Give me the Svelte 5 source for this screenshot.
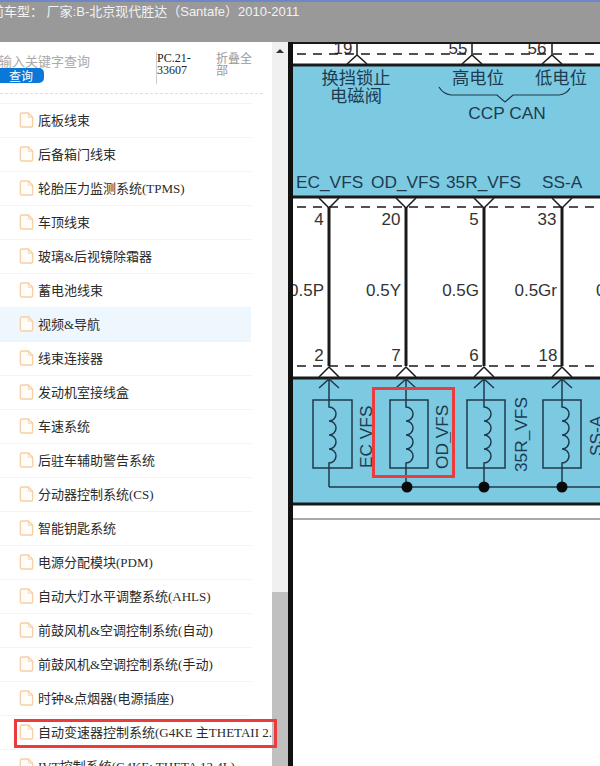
<script>
  const items = [
    '底板线束', '后备箱门线束', '轮胎压力监测系统(TPMS)', '车顶线束', '玻璃&后视镜除霜器',
    '蓄电池线束', '视频&导航', '线束连接器', '发动机室接线盒', '车速系统', '后驻车辅助警告系统',
    '分动器控制系统(CS)', '智能钥匙系统', '电源分配模块(PDM)', '自动大灯水平调整系统(AHLS)',
    '前鼓风机&空调控制系统(自动)', '前鼓风机&空调控制系统(手动)', '时钟&点烟器(电源插座)',
    '自动变速器控制系统(G4KE 主THETAII 2.4L)', 'IVT控制系统(G4KE: THETA 12.4L)'
  ];
  const wires = [
    { x: 329, box: 313, w: 39 },
    { x: 406, box: 390, w: 38 },
    { x: 484, box: 467, w: 38 },
    { x: 562, box: 543, w: 38 }
  ];
  const tops = [357, 472, 552];
  const upper = [['4', 319], ['20', 391], ['5', 474], ['33', 547]];
  const lower = [['2', 319], ['7', 396], ['6', 474], ['18', 548]];
  const gauges = [['0.5P', 324], ['0.5Y', 401], ['0.5G', 479], ['0.5Gr', 557]];
  const coil = 'a7 7 0 0 1 0 14 a7 7 0 0 1 0 14 a7 7 0 0 1 0 14 a7 7 0 0 1 0 14';
</script>

<div class="page">
  <header class="top">前车型： 厂家:B-北京现代胜达（Santafe）2010-2011</header>

  <div class="main">
    <aside class="side">
      <div class="search">
        <div class="query">
          <div class="hint">输入关键字查询</div>
          <button class="go">查询</button>
        </div>
        <div class="code">PC.21-33607</div>
        <div class="fold">折叠全部</div>
      </div>
      <ul class="list">
        {#each items as item, i}
          <li class:hover={i === 6} class:picked={i === 18}>
            <svg class="doc" width="15" height="16" viewBox="0 0 15 17">
              <path d="M2.500 1h7l4.500 4.500v9a1.500 1.500 0 0 1-1.500 1.500h-10a1.500 1.500 0 0 1-1.500-1.500v-12a1.500 1.500 0 0 1 1.500-1.500z" fill="#fffdf9" stroke="#f6d0a6" stroke-width="1.500" />
              <path d="M9.500 1v4.500h4.500" fill="none" stroke="#f6d0a6" />
            </svg>
            <span>{item}</span>
          </li>
        {/each}
      </ul>
    </aside>

    <div class="scroll">
      <div class="arrow"></div>
      <div class="thumb"></div>
    </div>

    <svg class="diagram" width="312" height="724" viewBox="288 42 312 724">
      <rect x="288" y="42" width="312" height="724" fill="#fff" />
      <rect x="293" y="65" width="307" height="132" fill="#7ccae2" />
      <rect x="293" y="378" width="307" height="126" fill="#7ccae2" />

      <g class="pin" text-anchor="middle">
        <text x="343" y="54">19</text>
        <text x="458" y="54">55</text>
        <text x="537" y="54">56</text>
        {#each upper as [t, x]}<text {x} y="225">{t}</text>{/each}
        {#each lower as [t, x]}<text {x} y="361">{t}</text>{/each}
      </g>
      <g class="pin" text-anchor="end">
        {#each gauges as [t, x]}<text {x} y="296">{t}</text>{/each}
      </g>
      <text class="edge" x="596" y="296">0</text>

      <g stroke="#1a1a1a" fill="none">
        <path d="M288 43H600" stroke-width="2" />
        <path d="M293 65H600M293 197H600M293 378H600M293 504H600" stroke-width="3" />
        <path d="M293 519H600" stroke="#555" />
        <path d="M297 54H600M297 207H600M297 366H600" stroke-width="1.500" stroke-dasharray="9 7" />

        {#each tops as x}
          <path d="M{x} 42V55M{x - 10} 64L{x} 55L{x + 10} 64" stroke-width="1.500" />
        {/each}

        {#each wires as w}
          <path d="M{w.x} 207V366" stroke-width="3" />
          <path d="M{w.x - 10} 198L{w.x} 208L{w.x + 10} 198M{w.x - 10} 377L{w.x} 367L{w.x + 10} 377" stroke-width="1.500" />
          <path d="M{w.x} 379V407{coil}V487M{w.x - 10} 388L{w.x} 379L{w.x + 10} 388" stroke="#1f3a4a" stroke-width="1.500" />
          <rect x={w.box} y="400" width={w.w} height="68" stroke="#1f3a4a" stroke-width="1.500" />
        {/each}

        <path d="M329 487H600" stroke="#1f3a4a" stroke-width="1.500" />
        <path d="M439 87q4 7 12 8h46l8 7 8-7h46q8-1 11-7" stroke="#1f3a4a" stroke-width="1.200" />
        <path d="M450.500 432V443" stroke="#4a6f82" stroke-width="1.200" />
        <path d="M290.500 42V766" stroke-width="5" stroke="#111" />
      </g>

      <circle cx="407" cy="487" r="5.500" fill="#0a0a0a" />
      <circle cx="484" cy="487" r="5.500" fill="#0a0a0a" />
      <circle cx="562" cy="487" r="5.500" fill="#0a0a0a" />

      <g class="label">
        <text x="356" y="84" text-anchor="middle">换挡锁止</text>
        <text x="356" y="102" text-anchor="middle">电磁阀</text>
        <text x="478" y="84" text-anchor="middle">高电位</text>
        <text x="561" y="84" text-anchor="middle">低电位</text>
        <text x="507" y="119" text-anchor="middle">CCP CAN</text>
        <text x="296" y="188">EC_VFS</text>
        <text x="371" y="188">OD_VFS</text>
        <text x="446" y="188">35R_VFS</text>
        <text x="542" y="188">SS-A</text>
        <text transform="translate(372 468) rotate(-90)">EC VFS</text>
        <text transform="translate(448 469) rotate(-90)">OD VFS</text>
        <text transform="translate(527 472) rotate(-90)">35R_VFS</text>
        <text transform="translate(602 456) rotate(-90)">SS-A</text>
      </g>

      <rect x="373.500" y="388.500" width="80" height="88" fill="none" stroke="#ec3b3b" stroke-width="3" />
    </svg>
  </div>
</div>

<style>
  :global(body) {
    margin: 0;
    overflow: hidden;
  }
  .page {
    width: 600px;
    height: 766px;
    display: flex;
    flex-direction: column;
    overflow: hidden;
    font-family: "Liberation Serif", "Noto Sans CJK SC", serif;
  }
  .top {
    height: 40px;
    flex: none;
    margin-left: -9px;
    border-top: 2px solid #6f86c9;
    background: #999;
    color: #f2f2f2;
    font: 13px/19px "Liberation Sans", "Noto Sans CJK SC", sans-serif;
    white-space: nowrap;
  }
  .main {
    flex: 1;
    min-height: 0;
    display: flex;
  }
  .side {
    width: 272px;
    flex: none;
    background: #fff;
  }
  .search {
    height: 51px;
    width: 263px;
    display: flex;
    border-bottom: 1px dashed #ddd;
    margin-bottom: 9px;
  }
  .query {
    width: 157px;
    flex: none;
    padding-top: 12px;
  }
  .hint {
    margin-left: -1px;
    color: #aaa;
    font: 13px/14px "Noto Sans CJK SC", sans-serif;
  }
  .go {
    display: block;
    width: 44px;
    height: 15px;
    padding: 0 2px 0 0;
    border: 0;
    border-radius: 0 5px 5px 0;
    background: #0a78d6;
    color: #fff;
    font: 12px/15px "Noto Sans CJK SC", sans-serif;
    text-align: center;
  }
  .code {
    width: 44px;
    height: 32px;
    margin: 10px 0 0 -1px;
    border-left: 1px solid #ccc;
    color: #222;
    font-size: 12px;
    line-height: 12px;
  }
  .fold {
    width: 38px;
    margin: 10px 0 0 15px;
    color: #999;
    font: 12px/12px "Noto Sans CJK SC", sans-serif;
  }
  .list {
    list-style: none;
    margin: 0;
    padding: 0;
    width: 251px;
  }
  .list li {
    height: 31px;
    padding: 0 0 2px 19px;
    border-top: 1px solid #f3f3f3;
    display: flex;
    align-items: center;
    gap: 4px;
    white-space: nowrap;
    font-size: 13px;
    color: #2a2a2a;
  }
  .list li span {
    flex: none;
    max-width: 234px;
    overflow: hidden;
    font-family: "Liberation Serif", "Noto Sans CJK SC", serif;
  }
  .list li.hover {
    background: #eef7fd;
  }
  .list li.picked {
    position: relative;
  }
  .list li.picked::after {
    content: "";
    position: absolute;
    left: 14px;
    top: 3px;
    width: 257px;
    height: 23px;
    border: 3px solid #ec3b3b;
    pointer-events: none;
  }
  .doc {
    flex: none;
    margin-top: 1px;
  }
  .scroll {
    width: 16px;
    flex: none;
    display: flex;
    flex-direction: column;
    background: #f0f0f0;
  }
  .arrow {
    width: 0;
    height: 0;
    margin: 7px 0 0 4px;
    border: 4px solid transparent;
    border-top: 0;
    border-bottom: 4px solid #333;
  }
  .thumb {
    margin-top: auto;
    height: 174px;
    background: #c0c0c0;
  }
  .diagram {
    flex: none;
    display: block;
  }
  .pin text,
  .edge {
    font: 17px "Liberation Sans", sans-serif;
    fill: #333;
  }
  .label text {
    font: 17.300px "Liberation Sans", "Noto Sans CJK SC", sans-serif;
    fill: #1d3c50;
  }
</style>
